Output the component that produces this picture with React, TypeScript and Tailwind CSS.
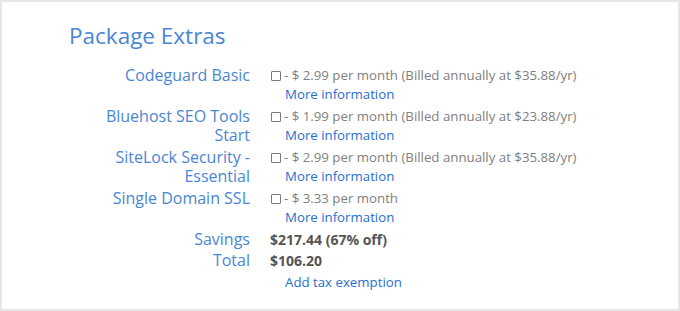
import React from 'react';

type Extra = {
  name: string;
  price: string;
};

const extras: Extra[] = [
  { name: 'Codeguard Basic', price: '- $ 2.99 per month (Billed annually at $35.88/yr)' },
  { name: 'Bluehost SEO Tools Start', price: '- $ 1.99 per month (Billed annually at $23.88/yr)' },
  { name: 'SiteLock Security - Essential', price: '- $ 2.99 per month (Billed annually at $35.88/yr)' },
  { name: 'Single Domain SSL', price: '- $ 3.33 per month' },
];

const Checkbox: React.FC = () => (
  <span className="inline-block w-[10px] h-[10px] border border-[#7a7a7a] rounded-[1px] ml-[1px] mr-[3px] align-[-1px] bg-white"></span>
);

export default function App() {
  return (
    <div
      className="w-[680px] h-[311px] bg-white border-2 border-[#e6e6e6] pl-[67px] pt-[20px]"
      style={{ fontFamily: '"Open Sans", "Liberation Sans", sans-serif' }}
    >
      <h1 className="text-[22.5px] leading-[28.8px] text-[#4a86d4] mb-[15px]">Package Extras</h1>

      <div className="flex flex-col gap-[2px] text-[16px] leading-[19.5px]">
        {extras.map((extra) => (
          <div key={extra.name} className="flex gap-[20px]">
            <div className="w-[181px] text-right text-[#4a86d4]">{extra.name}</div>
            <div className="text-[13.25px]">
              <div className="text-[#808080]">
                <Checkbox />
                {extra.price}
              </div>
              <a href="#" className="block pl-[15px] text-[#1f6fd1]">
                More information
              </a>
            </div>
          </div>
        ))}

        <div className="flex gap-[20px]">
          <div className="w-[181px] text-right text-[#4a86d4]">Savings</div>
          <div className="text-[14px] font-bold text-[#555555]">$217.44 (67% off)</div>
        </div>
        <div className="flex gap-[20px]">
          <div className="w-[181px] text-right text-[#4a86d4]">Total</div>
          <div>
            <div className="text-[14px] font-bold text-[#555555]">$106.20</div>
            <a href="#" className="block pl-[15px] text-[13.25px] text-[#1f6fd1] mt-[2px]">
              Add tax exemption
            </a>
          </div>
        </div>
      </div>
    </div>
  );
}
